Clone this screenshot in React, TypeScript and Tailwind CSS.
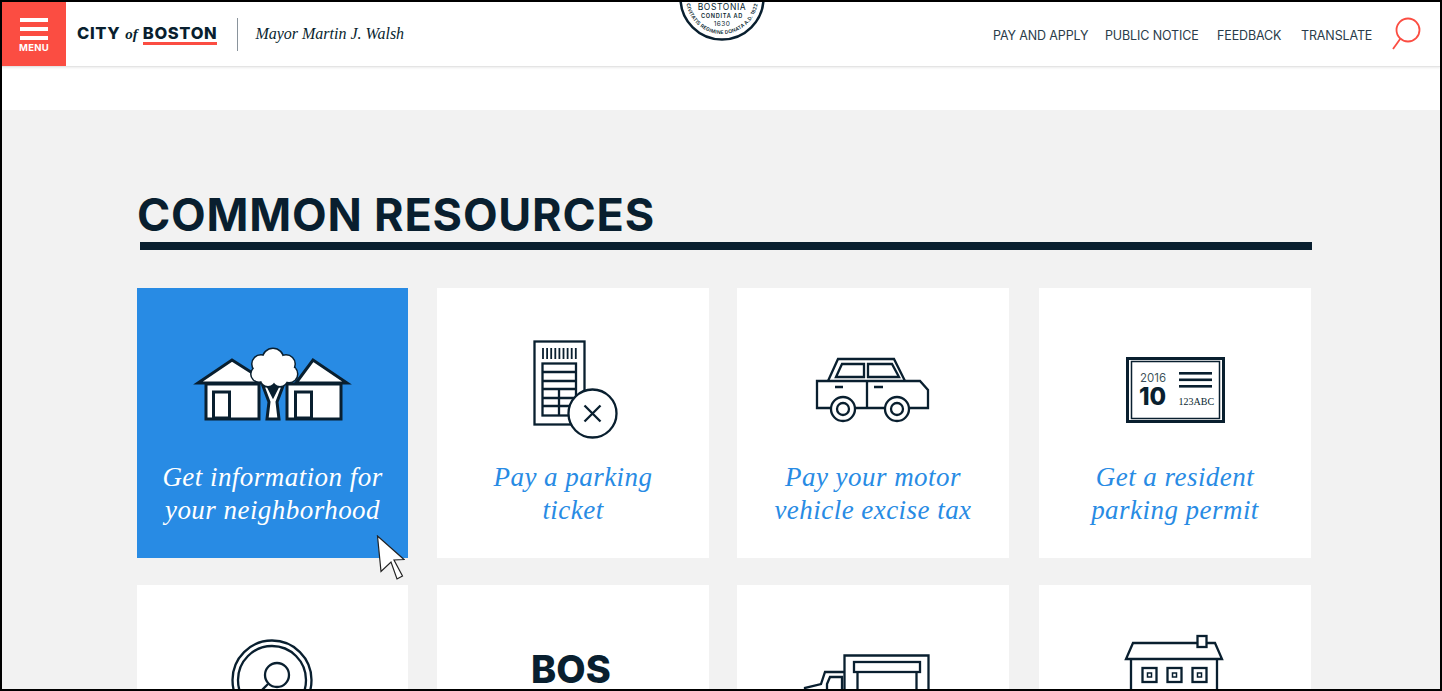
import React from "react";

const DARK = "#091f2f";

const navLinks = [
  { label: "PAY AND APPLY", className: "mt-[4px] w-[112px]" },
  { label: "PUBLIC NOTICE", className: "mt-[4px] w-[112px]" },
  { label: "FEEDBACK", className: "mt-[4px] w-[84px]" },
  { label: "TRANSLATE", className: "mt-[4px] w-[70px]" },
];

const Seal = () => (
  <svg viewBox="678 -46 88 88" className="absolute left-[676px] top-[-48px] h-[88px] w-[88px]">
    <defs>
      <path id="seal-ring" d="M 688.2 -14.3 A 36 36 0 1 0 755.8 -14.3" />
    </defs>
    <circle cx="722" cy="-2" r="41.5" fill="#fff" stroke={DARK} strokeWidth="2.5" />
    <g fill={DARK} textAnchor="middle" fontFamily="Inter, sans-serif">
      <text x="722" y="10" fontSize="8.5" letterSpacing="0.6">BOSTONIA</text>
      <text x="722" y="18" fontSize="5.6" fontWeight="600" letterSpacing="0.7">CONDITA AD</text>
      <text x="722" y="26" fontSize="6.5" letterSpacing="0.4">1630</text>
      <text fontSize="4.9" fontWeight="600" letterSpacing="0.2">
        <textPath href="#seal-ring" startOffset="50%">CIVITATIS REGIMINE DONATA A.D. 1822</textPath>
      </text>
    </g>
  </svg>
);

const crown = [
  [273, 359, 10],
  [261, 364, 8.5],
  [286, 364, 8.5],
  [259, 374, 7.5],
  [289, 374, 8],
  [268, 379, 7],
  [280, 379, 7],
];

const Neighborhood = () => (
  <g fill="#fff" stroke={DARK} strokeWidth="3" strokeLinejoin="miter">
    <path d="M198 383 L232 360 L268 383 Z" />
    <path d="M296 383 L313 360 L347 383 Z" />
    <rect x="206" y="384" width="53" height="35" />
    <rect x="287" y="384" width="54" height="35" />
    <rect x="213.5" y="392" width="16" height="26" />
    <rect x="295.5" y="392" width="16" height="26" />
    <path d="M263 386 L269 402 L267 419 L279 419 L277 402 L283 386 Z" />
    <path d="M268 386 L273 396 L278 386" fill={DARK} />
    {crown.map(([cx, cy, r]) => (
      <circle key={`${cx}-${cy}`} cx={cx} cy={cy} r={r} />
    ))}
    <g stroke="none">
      {crown.map(([cx, cy, r]) => (
        <circle key={`${cx}-${cy}`} cx={cx} cy={cy} r={r} />
      ))}
      <circle cx="273" cy="369" r="13" />
    </g>
  </g>
);

const Ticket = () => (
  <g fill="none" stroke={DARK} strokeWidth="2.3">
    <rect x="534.5" y="341.5" width="50" height="83" />
    {[0, 1, 2, 3, 4, 5, 6, 7, 8].map((i) => (
      <line key={i} x1={543 + i * 4.1} x2={543 + i * 4.1} y1="348" y2="359" strokeWidth="1.8" />
    ))}
    <rect x="542.5" y="363.5" width="33.5" height="52" />
    {[372, 381, 389, 398, 406].map((y) => (
      <line key={y} x1="542" x2="576" y1={y} y2={y} />
    ))}
    <line x1="559" x2="559" y1="389" y2="416" />
    <circle cx="592.5" cy="413.5" r="24" fill="#fff" />
    <path d="M584.5 405.5 L600.5 421.5 M600.5 405.5 L584.5 421.5" />
  </g>
);

const Car = () => (
  <g fill="none" stroke={DARK} strokeWidth="2.3">
    <path d="M817 381 L920 381 L928 390 L928 408 L817 408 Z" />
    <path d="M828 381 L838 359 L894 359 L905 381" />
    <path d="M836 377 L842 364 L864 364 L864 377 Z" />
    <path d="M868 364 L892 364 L899 377 L868 377 Z" />
    <path d="M867 381 L867 408 M835 387 L843 387 M874 387 L883 387" />
    <circle cx="843" cy="409" r="12" fill="#fff" />
    <circle cx="843" cy="409" r="6" />
    <circle cx="897" cy="409" r="12" fill="#fff" />
    <circle cx="897" cy="409" r="6" />
  </g>
);

const Permit = () => (
  <g fill={DARK}>
    <rect x="1127.5" y="358.5" width="96" height="63" fill="none" stroke={DARK} strokeWidth="3" />
    <rect x="1131.5" y="361.5" width="88" height="57" fill="none" stroke={DARK} strokeWidth="1.5" />
    <text x="1140" y="382" fontSize="11.5" fontFamily="Inter, sans-serif" fillOpacity="0.8">2016</text>
    <text x="1139" y="405" fontSize="24" fontWeight="800" fontFamily="Inter, sans-serif">10</text>
    <rect x="1179" y="372" width="33" height="2.6" />
    <rect x="1179" y="378.5" width="33" height="2.6" />
    <rect x="1179" y="385" width="33" height="2.6" />
    <text x="1178.5" y="405" fontSize="10" fontFamily="'Liberation Serif', serif">123ABC</text>
  </g>
);

const Search = () => (
  <g fill="none" stroke={DARK} strokeWidth="2.3">
    <circle cx="272" cy="680" r="39.5" />
    <circle cx="272" cy="680" r="34" />
    <circle cx="277" cy="675" r="12" />
    <path d="M268 684 L258 694" />
  </g>
);

const Bos = () => (
  <text x="531" y="683" fill={DARK} fontSize="38" fontWeight="800" fontFamily="Inter, sans-serif">
    BOS
  </text>
);

const Truck = () => (
  <g fill="none" stroke={DARK} strokeWidth="2.3">
    <path d="M844.5 700 L844.5 655.5 L928.5 655.5 L928.5 700" />
    <rect x="854" y="662" width="66" height="10" />
    <path d="M857.5 672 L857.5 700 M916.5 672 L916.5 700" />
    <path d="M844 672 L825 672 L821 684 L805 688 L805 700" />
    <path d="M842 677 L830 677 L827 684 L827 700 L842 700 Z" />
  </g>
);

const House = () => (
  <g fill="none" stroke={DARK} strokeWidth="2.3">
    <path d="M1197 643 L1133 643 L1126 659 L1222 659 L1215 643 L1206 643" />
    <rect x="1197.5" y="636" width="9" height="11" />
    <path d="M1131 659 L1131 700 M1217 659 L1217 700" />
    {[1142.5, 1167.5, 1192.5].map((x) => (
      <g key={x}>
        <rect x={x} y="668" width="14" height="14" />
        <rect x={x + 5} y="673" width="4" height="4" strokeWidth="1.5" />
      </g>
    ))}
  </g>
);

const cards = [
  { x: 137, y: 288, icon: <Neighborhood />, lines: ["Get information for", "your neighborhood"], active: true },
  { x: 437, y: 288, icon: <Ticket />, lines: ["Pay a parking", "ticket"] },
  { x: 737, y: 288, icon: <Car />, lines: ["Pay your motor", "vehicle excise tax"] },
  { x: 1039, y: 288, icon: <Permit />, lines: ["Get a resident", "parking permit"] },
  { x: 137, y: 585, icon: <Search />, lines: [] },
  { x: 437, y: 585, icon: <Bos />, lines: [] },
  { x: 737, y: 585, icon: <Truck />, lines: [] },
  { x: 1039, y: 585, icon: <House />, lines: [] },
];

export default function App() {
  return (
    <div className="relative h-[691px] w-[1442px] overflow-hidden border-2 border-black bg-white font-['Inter',sans-serif]">
      <header className="relative flex h-[65px] items-center border-b border-[#e4e4e4] shadow-[0_1px_2px_rgba(0,0,0,0.08)]">
        <div className="flex h-[64px] w-[64px] flex-col items-center bg-[#fb4d42] pt-[16px]">
          <span className="h-[4px] w-[28px] bg-white" />
          <span className="mt-[5px] h-[4px] w-[28px] bg-white" />
          <span className="mt-[5px] h-[4px] w-[28px] bg-white" />
          <span className="mt-[2px] text-[9.5px] leading-[12px] font-bold tracking-[0.03em] text-white">MENU</span>
        </div>
        <div className="ml-[11px] flex items-baseline text-[16.5px] leading-[20px] font-extrabold tracking-[0.04em] text-[#091f2f]">
          <span>CITY</span>
          <span className="mx-[5px] font-['Liberation_Serif',serif] text-[15px] font-bold tracking-normal italic">of</span>
          <span className="border-b-[3px] border-[#fb4d42] leading-[17px]">BOSTON</span>
        </div>
        <div className="ml-[20px] h-[33px] w-px bg-[#8a949c]" />
        <div className="ml-[17px] font-['Liberation_Serif',serif] text-[16px] text-[#091f2f] italic">Mayor Martin J. Walsh</div>
        <nav className="ml-auto flex items-center pr-[19px] text-[12.5px] tracking-[-0.01em] text-[#2a3c4a]">
          {navLinks.map((link) => (
            <a key={link.label} className={link.className}>
              {link.label}
            </a>
          ))}
          <svg viewBox="0 0 30 36" className="ml-[20px] h-[36px] w-[30px]">
            <circle cx="17" cy="14" r="11.5" fill="none" stroke="#fb4d42" strokeWidth="1.8" />
            <path d="M9.5 22.5 L2 33" fill="none" stroke="#fb4d42" strokeWidth="1.8" />
          </svg>
        </nav>
      </header>
      <Seal />
      <main className="mt-[43px] h-[600px] bg-[#f2f2f2] pt-[78px] pl-[135px]">
        <h2 className="h-[54px] text-[45px] leading-[54px] font-bold tracking-[0.018em] text-[#091f2f]">COMMON RESOURCES</h2>
        <div className="ml-[3px] h-[8px] w-[1172px] bg-[#091f2f]" />
        <div className="mt-[38px] grid grid-cols-[300px_300px_302px_272px] gap-y-[27px]">
          {cards.map((card) => (
            <div
              key={`${card.x}-${card.y}`}
              className={
                card.active
                  ? "h-[270px] w-[271px] overflow-hidden bg-[#288be4]"
                  : card.x === 137
                    ? "h-[270px] w-[271px] overflow-hidden bg-white"
                    : "h-[270px] w-[272px] overflow-hidden bg-white"
              }
            >
              <svg viewBox={`${card.x} ${card.y} 271 173`} className="block h-[173px] w-[271px]">
                {card.icon}
              </svg>
              <div
                className={
                  card.active
                    ? "text-center font-['Liberation_Serif',serif] text-[27px] leading-[33px] tracking-[0.017em] text-white italic"
                    : "text-center font-['Liberation_Serif',serif] text-[27px] leading-[33px] tracking-[0.017em] text-[#288be4] italic"
                }
              >
                {card.lines.map((line) => (
                  <div key={line}>{line}</div>
                ))}
              </div>
            </div>
          ))}
        </div>
      </main>
      <svg viewBox="0 0 30 48" className="absolute top-[533px] left-[373px] h-[48px] w-[30px]">
        <path
          d="M2.5 1 L6 36.5 L16 27 L22 44 L27.5 41 L19 25 L29 24.5 Z"
          fill="#fff"
          stroke="#222"
          strokeWidth="1.2"
        />
      </svg>
    </div>
  );
}
